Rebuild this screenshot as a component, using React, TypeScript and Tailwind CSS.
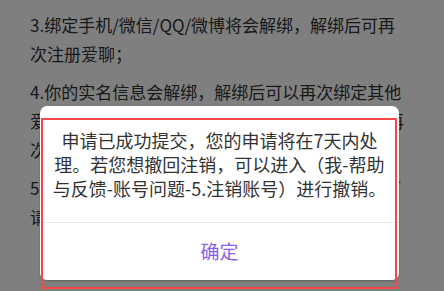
import React from "react";

const font = { fontFamily: '"Noto Sans CJK SC", "Noto Sans", sans-serif' };

export default function App() {
  const paras: string[][] = [
    ["3.绑定手机/微信/QQ/微博将会解绑，解绑后可再", "次注册爱聊；"],
    [
      "4.你的实名信息会解绑，解绑后可以再次绑定其他",
      "爱聊账号，但注销后该实名信息在三十天内无法再",
      "次绑定新的爱聊账号；",
    ],
    ["5.注销后，你在爱聊内的所有数据将被清空，且可", "请谨慎操作。"],
  ];
  return (
    <div className="relative w-[444px] h-[291px] overflow-hidden bg-white" style={font}>
      <div className="pt-[10px] pl-[30px] flex flex-col gap-[9px] text-[17px] leading-[29px] text-[#333333]">
        {paras.map((p, i) => (
          <div key={i}>
            {p.map((l, j) => (
              <div key={j} className="whitespace-nowrap">
                {l}
              </div>
            ))}
          </div>
        ))}
      </div>
      <div className="absolute inset-0 bg-black/50" />
      <div className="absolute left-[40px] top-[106px] w-[359px] h-[174px] bg-white rounded-[7px] shadow-[0_1px_2px_rgba(0,0,0,0.25)] flex flex-col">
        <div className="h-[116px] flex items-center justify-center text-center text-[18px] leading-[24px] text-[#333333]">
          <div>
            申请已成功提交，您的申请将在7天内处
            <br />
            理。若您想撤回注销，可以进入（我-帮助
            <br />
            与反馈-账号问题-5.注销账号）进行撤销。
          </div>
        </div>
        <div className="h-px bg-[#ececec]" />
        <div className="flex-1 flex items-center justify-center text-[19px] text-[#8a5cf0]">确定</div>
      </div>
      <div className="absolute left-[41px] top-[118px] w-[356px] h-[171px] border-2 border-[#f24848]" />
    </div>
  );
}
